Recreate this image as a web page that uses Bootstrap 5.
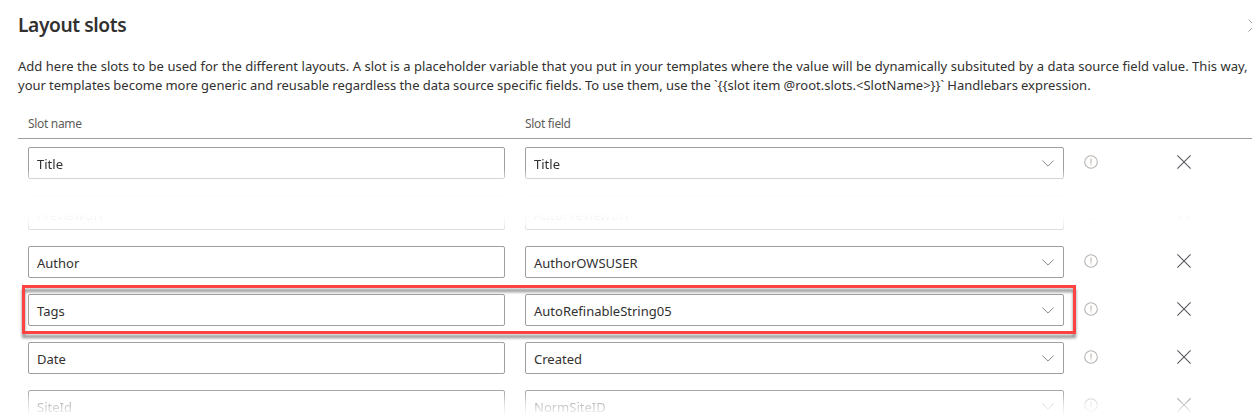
<!DOCTYPE html>
<html lang="en">
<head>
<meta charset="utf-8">
<title>Layout slots</title>
<link rel="stylesheet" href="https://cdn.jsdelivr.net/npm/bootstrap@5.3.0/dist/css/bootstrap.min.css">
<style>
body{font-family:"Noto Sans","Open Sans",sans-serif;font-size:13px;color:#323130;background:#fff;overflow:hidden;height:419px}
.panel-body{padding-left:18px}
.panel-title{font-size:19.2px;font-weight:600;line-height:26px;letter-spacing:-.4px}
.panel-head{height:52px;padding-top:12px}
.panel-close{width:13px;height:13px;margin:7px -9px 0 0}
.intro{line-height:19px;height:57px;padding-top:5px}
.intro span{display:block;white-space:nowrap}
.t1{word-spacing:.12px}
.t2{word-spacing:-.2px}
.slot-grid{display:grid;grid-template-columns:477px 539px 54px 1fr;column-gap:20px;padding-left:10px}
.slot-grid.cells{column-gap:0;grid-template-columns:477px 20px 539px 13px 28px 70px 20px}
.slot-head{height:30px;font-size:12px;letter-spacing:-.32px;line-height:30px;color:#605e5c;border-bottom:1px solid #a19f9d}
.slot-rows{padding-top:8px}
.slot-line{height:32px;position:relative;margin-bottom:16px}
.field{height:32px;border:1px solid #a19f9d;border-radius:2px;padding:1px 8px 0;line-height:31px;white-space:nowrap}
.chev{width:12px;height:7px;margin:11px 1px 0 0}
.info{width:14px;height:14px;margin:7.5px 0 0 7px}
.del{width:14px;height:14px;margin:8px 0 0 2px}
.fade-end{-webkit-mask-image:linear-gradient(#000 22px,rgba(0,0,0,.45) 31px);mask-image:linear-gradient(#000 22px,rgba(0,0,0,.45) 31px)}
.fade-in{-webkit-mask-image:linear-gradient(transparent 15px,rgba(0,0,0,.04) 20px,rgba(0,0,0,.1) 25px,rgba(0,0,0,.34) 31px);mask-image:linear-gradient(transparent 15px,rgba(0,0,0,.04) 20px,rgba(0,0,0,.1) 25px,rgba(0,0,0,.34) 31px)}
.fade-out{-webkit-mask-image:linear-gradient(rgba(0,0,0,.9) 1px,rgba(0,0,0,.8) 4px,rgba(0,0,0,.35) 13px,transparent 26px);mask-image:linear-gradient(rgba(0,0,0,.9) 1px,rgba(0,0,0,.8) 4px,rgba(0,0,0,.35) 13px,transparent 26px)}
.callout{position:absolute;left:4px;top:-9px;width:1054px;height:49px;border:3px solid #ff4343;filter:drop-shadow(0 4px 1.8px rgba(0,0,0,.45));pointer-events:none}
.ghost{height:1px;background:#fcfcfc;margin-bottom:2px}
</style>
</head>
<body>
<svg class="d-none">
<symbol id="chev" viewBox="0 0 12 7"><path d="M.4.5 6 6.1 11.6.5" fill="none" stroke="#8a8886"/></symbol>
<symbol id="info" viewBox="0 0 14 14"><circle cx="7" cy="7" r="6.3" fill="none" stroke="#b9b5b2" stroke-width="1.1"/><path d="M7 3.5v5M7 9.5v1" stroke="#c6b8ad" stroke-width="1.2"/></symbol>
<symbol id="del" viewBox="0 0 14 14"><path d="M.4.4 13.6 13.6M13.6.4.4 13.6" fill="none" stroke="#55585d" stroke-width="1.1"/></symbol>
</svg>
<main class="panel-body">
<header class="panel-head d-flex justify-content-between">
<h1 class="panel-title m-0">Layout slots</h1>
<svg viewBox="0 0 13 13" class="panel-close flex-shrink-0"><path d="M.5.5l12 12M12.5.5l-12 12" stroke="#a19f9d"/></svg>
</header>
<p class="intro m-0"><span class="t1">Add here the slots to be used for the different layouts. A slot is a placeholder variable that you put in your templates where the value will be dynamically subsituted by a data source field value. This way,</span><span class="t2">your templates become more generic and reusable regardless the data source specific fields. To use them, use the `{{slot item @root.slots.&lt;SlotName&gt;}}` Handlebars expression.</span></p>
<div class="slot-grid slot-head"><span>Slot name</span><span>Slot field</span></div>
<section class="slot-rows">
<div class="slot-grid cells slot-line fade-end"><div class="field">Title</div><i></i><div class="field d-flex justify-content-between"><span>Title</span><svg class="chev"><use href="#chev"/></svg></div><i></i><svg class="info"><use href="#info"/></svg><i></i><svg class="del"><use href="#del"/></svg></div>
<div class="slot-grid cells"><div class="ghost"></div><i></i><div class="ghost"></div></div>
<div class="slot-grid cells slot-line fade-in"><div class="field">PreviewUrl</div><i></i><div class="field d-flex justify-content-between"><span>AutoPreviewUrl</span><svg class="chev"><use href="#chev"/></svg></div><i></i><svg class="info"><use href="#info"/></svg><i></i><svg class="del"><use href="#del"/></svg></div>
<div class="slot-grid cells slot-line"><div class="field">Author</div><i></i><div class="field d-flex justify-content-between"><span>AuthorOWSUSER</span><svg class="chev"><use href="#chev"/></svg></div><i></i><svg class="info"><use href="#info"/></svg><i></i><svg class="del"><use href="#del"/></svg></div>
<div class="slot-grid cells slot-line"><div class="field">Tags</div><i></i><div class="field d-flex justify-content-between"><span>AutoRefinableString05</span><svg class="chev"><use href="#chev"/></svg></div><i></i><svg class="info"><use href="#info"/></svg><i></i><svg class="del"><use href="#del"/></svg><div class="callout"></div></div>
<div class="slot-grid cells slot-line"><div class="field">Date</div><i></i><div class="field d-flex justify-content-between"><span>Created</span><svg class="chev"><use href="#chev"/></svg></div><i></i><svg class="info"><use href="#info"/></svg><i></i><svg class="del"><use href="#del"/></svg></div>
<div class="slot-grid cells slot-line fade-out mb-0"><div class="field">SiteId</div><i></i><div class="field d-flex justify-content-between"><span>NormSiteID</span><svg class="chev"><use href="#chev"/></svg></div><i></i><svg class="info"><use href="#info"/></svg><i></i><svg class="del"><use href="#del"/></svg></div>
</section>
</main>
<script src="https://cdn.jsdelivr.net/npm/bootstrap@5.3.0/dist/js/bootstrap.bundle.min.js"></script>
</body>
</html>
